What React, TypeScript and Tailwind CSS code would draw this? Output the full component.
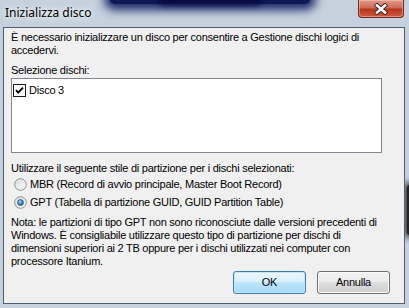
import React from "react";

const dlgFont = { fontFamily: '"Liberation Sans", Arial, sans-serif' };

function CheckBox() {
  return (
    <svg width="13" height="13" viewBox="0 0 13 13" className="shrink-0">
      <rect x="0.5" y="0.5" width="12" height="12" fill="#fff" stroke="#1c1c1c" />
      <path d="M3 6.2 L5.2 8.6 L10 3.6" fill="none" stroke="#000" strokeWidth="1.9" />
    </svg>
  );
}

function Radio({ checked }: { checked?: boolean }) {
  return (
    <svg width="13" height="13" viewBox="0 0 13 13" className="shrink-0">
      <defs>
        <linearGradient id="rf" x1="0" y1="0" x2="1" y2="1">
          <stop offset="0" stopColor="#d9dadb" />
          <stop offset="1" stopColor="#fbfbfb" />
        </linearGradient>
        <radialGradient id="rd" cx="0.4" cy="0.35" r="0.7">
          <stop offset="0" stopColor="#9fd4f6" />
          <stop offset="0.6" stopColor="#3a86c4" />
          <stop offset="1" stopColor="#1c4e7e" />
        </radialGradient>
      </defs>
      <circle cx="6.5" cy="6.5" r="5.8" fill="url(#rf)" stroke="#8e8f8f" strokeWidth="1" />
      {checked && <circle cx="6.5" cy="6.5" r="3" fill="url(#rd)" stroke="#1d4a74" strokeWidth="0.6" />}
    </svg>
  );
}

function Button({ children, def }: { children: React.ReactNode; def?: boolean }) {
  return (
    <div
      className={`w-[73px] h-[23px] rounded-[3px] border flex items-center justify-center text-[11px] text-black ${
        def
          ? "border-[#3c7fb1] bg-[linear-gradient(#eaf6fd_0%,#d9f0fc_49%,#bee6fd_50%,#a7d9f5_100%)] shadow-[inset_0_0_0_1px_#c6e6f8]"
          : "border-[#707070] bg-[linear-gradient(#f2f2f2_0%,#ebebeb_49%,#dddddd_50%,#cfcfcf_100%)] shadow-[inset_0_0_0_1px_#fcfcfc]"
      }`}
      style={dlgFont}
    >
      {children}
    </div>
  );
}

export default function App() {
  return (
    <div className="relative w-[409px] h-[308px] overflow-hidden flex flex-col bg-[#c5d1dd]">
      {/* glass reflections (decorative overlays) */}
      <div className="absolute left-[110px] top-[-6px] w-[200px] h-[10px] rounded-full bg-[#0e1a56] shadow-[0_0_10px_6px_#1a2a68]" />
      <div className="absolute left-[160px] top-[-5px] w-[100px] h-[7px] rounded-full bg-[#060c40] shadow-[0_0_6px_3px_#060c40]" />
      <div className="absolute right-[-4px] top-[185px] w-[6px] h-[50px] rounded-full bg-[#222222] shadow-[0_0_6px_3px_#333333]" />

      {/* Title bar */}
      <div className="relative z-10 h-[27px] shrink-0 flex items-start justify-between">
        <div
          className="pl-[5px] pt-[5px] text-[12px] leading-[16px] text-black [text-shadow:0_0_6px_#ffffff,0_0_10px_#ffffff]"
          style={{ fontFamily: '"Noto Sans", "Open Sans", sans-serif' }}
        >
          Inizializza disco
        </div>
        <div className="mr-[5px] w-[46px] h-[18px] rounded-b-[4px] border border-t-0 border-[#6e2a20] bg-[linear-gradient(#e29a8a_0%,#d06a56_45%,#b8361f_55%,#cf5a43_100%)] shadow-[inset_0_0_0_1px_rgba(255,210,200,0.45)] flex items-center justify-center">
          <svg width="16" height="12" viewBox="0 0 16 12">
            <path d="M4 2.5 L12 9.5 M12 2.5 L4 9.5" stroke="#3d2a28" strokeWidth="4.4" strokeLinecap="square" />
            <path d="M4 2.5 L12 9.5 M12 2.5 L4 9.5" stroke="#ffffff" strokeWidth="2.6" strokeLinecap="square" />
          </svg>
        </div>
      </div>

      {/* Client area */}
      <div
        className="relative z-10 ml-[3px] mr-[4px] mb-[4px] flex-1 border border-[#4f5e6f] bg-[#f0f0f0] flex flex-col text-[11px] leading-[13px] tracking-[-0.25px] text-black pl-[7px] pt-[3px] whitespace-nowrap"
        style={dlgFont}
      >
        <div>
          È necessario inizializzare un disco per consentire a Gestione dischi logici di
          <br />
          accedervi.
        </div>
        <div className="mt-[7px]">Selezione dischi:</div>
        <div className="mt-[1px] w-[371px] h-[75px] border border-[#828790] bg-white pl-[1px] pt-[5px]">
          <div className="flex items-center gap-[3px]">
            <CheckBox />
            <span>Disco 3</span>
          </div>
        </div>
        <div className="mt-[9px]">Utilizzare il seguente stile di partizione per i dischi selezionati:</div>
        <div className="mt-[2px] ml-[3px] flex items-center gap-[3px] h-[15px]">
          <Radio />
          <span>MBR (Record di avvio principale, Master Boot Record)</span>
        </div>
        <div className="mt-[3px] ml-[3px] flex items-center gap-[3px] h-[15px]">
          <Radio checked />
          <span>GPT (Tabella di partizione GUID, GUID Partition Table)</span>
        </div>
        <div className="mt-[6px]">
          Nota: le partizioni di tipo GPT non sono riconosciute dalle versioni precedenti di
          <br />
          Windows. È consigliabile utilizzare questo tipo di partizione per dischi di
          <br />
          dimensioni superiori ai 2 TB oppure per i dischi utilizzati nei computer con
          <br />
          processore Itanium.
        </div>
        <div className="mt-[3px] flex justify-end gap-[11px] pr-[14px]">
          <Button def>OK</Button>
          <Button>Annulla</Button>
        </div>
      </div>
    </div>
  );
}
